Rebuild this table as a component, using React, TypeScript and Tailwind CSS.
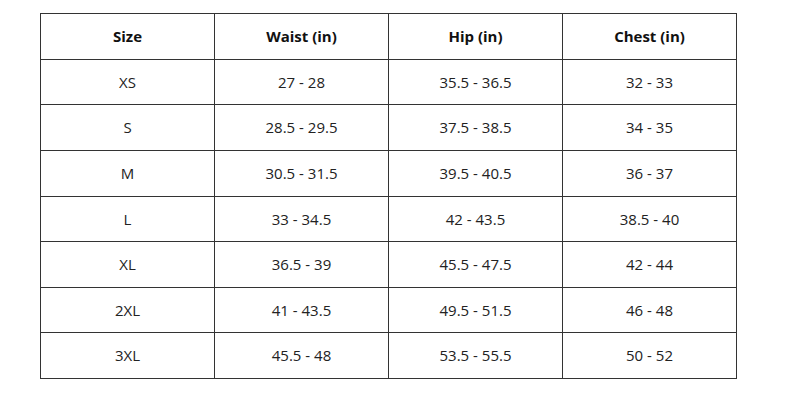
import React from "react";

const headers = ["Size", "Waist (in)", "Hip (in)", "Chest (in)"];
const rows = [
  ["XS", "27 - 28", "35.5 - 36.5", "32 - 33"],
  ["S", "28.5 - 29.5", "37.5 - 38.5", "34 - 35"],
  ["M", "30.5 - 31.5", "39.5 - 40.5", "36 - 37"],
  ["L", "33 - 34.5", "42 - 43.5", "38.5 - 40"],
  ["XL", "36.5 - 39", "45.5 - 47.5", "42 - 44"],
  ["2XL", "41 - 43.5", "49.5 - 51.5", "46 - 48"],
  ["3XL", "45.5 - 48", "53.5 - 55.5", "50 - 52"],
];

export default function App() {
  return (
    <div className="w-[800px] h-[400px] bg-white pl-[40px] pt-[13px]" style={{ fontFamily: '"Open Sans", "Noto Sans", sans-serif' }}>
      <div className="grid grid-cols-4 grid-rows-8 w-[697px] h-[366px] border-l border-t border-[#333]">
        {headers.map((h) => (
          <div key={h} className="flex items-center justify-center border-r border-b border-[#333] text-[15px] font-bold text-[#111]">
            {h}
          </div>
        ))}
        {rows.map((r, i) =>
          r.map((c, j) => (
            <div
              key={`${i}-${j}`}
              className="flex items-center justify-center border-r border-b border-[#333] text-[15px] text-[#222]"
            >
              {c}
            </div>
          ))
        )}
      </div>
    </div>
  );
}
